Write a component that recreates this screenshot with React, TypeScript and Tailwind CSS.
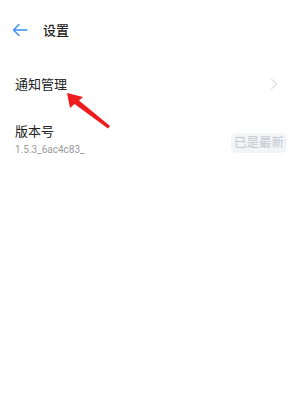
import React from "react";

export default function App() {
  return (
    <div
      className="relative w-[288px] h-[415px] bg-white overflow-hidden"
      style={{ fontFamily: '"Noto Sans CJK SC", "Noto Sans", sans-serif' }}
    >
      <div className="h-[60px] flex items-center pl-[12px] pb-[1px]">
        <svg width="16" height="14" viewBox="0 0 16 14" fill="none">
          <path d="M15 7H1.5M7 1.5L1.5 7L7 12.5" stroke="#3b8ff6" strokeWidth="1.4" strokeLinecap="round" strokeLinejoin="round" />
        </svg>
        <span className="ml-[15px] text-[13px] font-medium text-[#222] leading-none">设置</span>
      </div>
      <div className="h-[48px] flex items-center justify-between pl-[15px] pr-[10px] pb-[1px]">
        <span className="text-[13px] text-[#222] leading-none">通知管理</span>
        <svg width="8" height="12" viewBox="0 0 8 12" fill="none">
          <path d="M1.5 1L6.5 6L1.5 11" stroke="#c8c8cc" strokeWidth="1" strokeLinecap="round" strokeLinejoin="round" />
        </svg>
      </div>
      <div className="flex items-center justify-between pl-[15px] pr-[1px] pt-[16px]">
        <div className="flex flex-col">
          <span className="text-[13px] text-[#222] leading-none">版本号</span>
          <span className="mt-[8px] text-[10px] text-[#999] leading-none" style={{ fontFamily: 'Roboto, "Noto Sans", sans-serif' }}>1.5.3_6ac4c83_</span>
        </div>
        <div className="mt-[6px] h-[20px] px-[3px] rounded-[5px] bg-[#f2f4f7] flex items-center">
          <span className="text-[12.5px] text-[#c2c6ce] leading-none">已是最新</span>
        </div>
      </div>
      <svg className="absolute left-0 top-0" width="288" height="415" viewBox="0 0 288 415">
        <polygon points="67,93 83,97 79,100.5 110,126 108,128.5 74.5,104 70,108" fill="#ee1c1c" />
      </svg>
    </div>
  );
}
